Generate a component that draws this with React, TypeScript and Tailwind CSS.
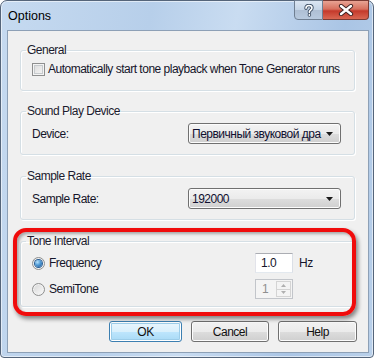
import type { ReactNode } from "react";

function Checkbox() {
  return (
    <span className="block h-[13px] w-[13px] shrink-0 border border-[#8e8f8f] bg-[linear-gradient(135deg,#d9d9d9,#f8f8f8)] shadow-[inset_0_0_0_1px_#f4f4f4,inset_0_0_0_2px_#c6cacd]" />
  );
}

function Radio({ checked }: { checked?: boolean }) {
  return (
    <span className="flex h-[13px] w-[13px] shrink-0 items-center justify-center rounded-full border border-[#8e8f8f] bg-[linear-gradient(135deg,#d6d6d6,#fbfbfb)] shadow-[inset_0_0_0_1px_#f2f2f2]">
      {checked && (
        <span className="block h-[7px] w-[7px] rounded-full bg-[radial-gradient(circle_at_35%_30%,#b7e2fb_0%,#4f9ad6_45%,#18508f_100%)] shadow-[0_0_0_1px_#2b5f95]" />
      )}
    </span>
  );
}

function Combo({ value }: { value: string }) {
  return (
    <div className="flex h-[21px] w-[153px] items-center rounded-[3px] border border-[#707070] bg-[linear-gradient(180deg,#f3f3f3_0%,#ebebeb_50%,#dddddd_51%,#cfcfcf_100%)] pl-[3px] pr-[7px] shadow-[inset_0_0_0_1px_#fcfcfc]">
      <span className="mr-[4px] flex-1 overflow-hidden whitespace-nowrap text-[#101030]">{value}</span>
      <svg width="7" height="4" viewBox="0 0 7 4" className="shrink-0">
        <path d="M0 0h7L3.5 4z" fill="#1a1a1a" />
      </svg>
    </div>
  );
}

function Group({ title, h, children }: { title: string; h: string; children: ReactNode }) {
  return (
    <fieldset className={`ml-[12px] w-[335px] rounded-[3px] border border-[#d5dfe5] shadow-[inset_1px_1px_0_#fff,1px_1px_0_#fff] ${h}`}>
      <legend className="ml-[5px] px-[1px] leading-[15px] text-[#1b1b2e]">{title}</legend>
      {children}
    </fieldset>
  );
}

function Button({ label, w, def }: { label: string; w: string; def?: boolean }) {
  return (
    <button
      className={`flex h-[21px] items-center justify-center rounded-[3px] border ${w} ${
        def
          ? "border-[#3c7fb1] bg-[linear-gradient(180deg,#eaf6fd_0%,#d9f0fc_50%,#bee6fd_51%,#a7d9f5_100%)] shadow-[inset_0_0_0_1px_#fff,inset_0_0_0_2px_#9ccde9]"
          : "border-[#707070] bg-[linear-gradient(180deg,#f2f2f2_0%,#ebebeb_50%,#dddddd_51%,#cfcfcf_100%)] shadow-[inset_0_0_0_1px_#fcfcfc]"
      } text-[#111]`}
    >
      {label}
    </button>
  );
}

export default function App() {
  return (
    <div className="h-[360px] w-[376px] bg-white font-['Segoe_UI','Liberation_Sans',sans-serif] text-[12px] tracking-[-0.5px] text-[#15152a]">
      <div className="flex h-[358px] w-[374px] flex-col rounded-t-[7px] rounded-b-[4px] border border-[#55657a] bg-[linear-gradient(100deg,#c6daf0_0%,#b7cfea_35%,#c9dcf1_55%,#aac5e5_80%,#b9d0ea_100%)] shadow-[inset_0_0_0_1px_rgba(255,255,255,0.55)]">
        {/* title bar */}
        <div className="flex h-[29px] items-start">
          <span className="ml-[7px] mt-[7px] text-[12.5px] leading-[16px] tracking-normal text-black">Options</span>
          <div className="ml-auto mr-[4px] -mt-px flex">
            <div className="flex h-[20px] w-[29px] items-center justify-center rounded-bl-[4px] border border-[#6f7f92] bg-[linear-gradient(180deg,#dbe6f3_0%,#c4d4e6_50%,#aebfd4_51%,#b8cadf_100%)]">
              <svg width="10" height="13" viewBox="0 0 10 13">
                <path
                  d="M2 4.2C2 2.4 3.3 1.5 5 1.5s3 .9 3 2.5c0 1.3-.9 1.8-1.7 2.3-.6.4-.9.7-.9 1.5V8.4"
                  fill="none"
                  stroke="#3e5066"
                  strokeWidth="3.4"
                  strokeLinecap="round"
                />
                <circle cx="5.4" cy="11" r="1.8" fill="#3e5066" />
                <path
                  d="M2 4.2C2 2.4 3.3 1.5 5 1.5s3 .9 3 2.5c0 1.3-.9 1.8-1.7 2.3-.6.4-.9.7-.9 1.5V8.4"
                  fill="none"
                  stroke="#ffffff"
                  strokeWidth="1.6"
                  strokeLinecap="round"
                />
                <circle cx="5.4" cy="11" r="0.9" fill="#ffffff" />
              </svg>
            </div>
            <div className="flex h-[20px] w-[46px] items-center justify-center rounded-br-[4px] border border-l-0 border-[#7a3a33] bg-[linear-gradient(180deg,#e8a393_0%,#d7705e_45%,#c4392b_55%,#d96752_100%)]">
              <svg width="16" height="12" viewBox="0 0 16 12">
                <path d="M3 2l10 8M13 2L3 10" stroke="#3a2020" strokeWidth="4.2" strokeLinecap="round" />
                <path d="M3 2l10 8M13 2L3 10" stroke="#ffffff" strokeWidth="2.4" strokeLinecap="round" />
              </svg>
            </div>
          </div>
        </div>

        {/* client area */}
        <div className="relative mb-[4px] ml-[6px] mr-[4px] flex flex-1 flex-col border border-[#8da0b6] bg-[#f0f0f0] pt-[12px]">
          <Group title="General" h="h-[48px]">
            <div className="ml-[11px] mt-[4px] flex items-center gap-[3px]">
              <Checkbox />
              <span className="whitespace-nowrap leading-[14px]">
                Automatically start tone playback when Tone Generator runs
              </span>
            </div>
          </Group>

          <div className="mt-[13px]">
            <Group title="Sound Play Device" h="h-[51px]">
              <div className="ml-[11px] mr-[13px] mt-[4px] flex items-center">
                <span>Device:</span>
                <div className="ml-auto">
                  <Combo value="Первичный звуковой дра" />
                </div>
              </div>
            </Group>
          </div>

          <div className="mt-[14px]">
            <Group title="Sample Rate" h="h-[51px]">
              <div className="ml-[11px] mr-[13px] mt-[4px] flex items-center">
                <span>Sample Rate:</span>
                <div className="ml-auto">
                  <Combo value="192000" />
                </div>
              </div>
            </Group>
          </div>

          <div className="mt-[14px]">
            <Group title="Tone Interval" h="h-[73px]">
              <div className="ml-[11px] mt-[4px] flex flex-col gap-[6px]">
                <div className="flex h-[20px] items-center">
                  <div className="flex w-[223px] items-center">
                    <Radio checked />
                    <span className="ml-[4px]">Frequency</span>
                  </div>
                  <div className="flex h-[20px] w-[38px] items-center border border-[#abadb3] border-b-[#e3e9ef] border-l-[#e2e3ea] border-r-[#dbdfe6] bg-white pl-[5px]">
                    1.0
                  </div>
                  <span className="ml-[6px]">Hz</span>
                </div>
                <div className="flex h-[20px] items-center">
                  <div className="flex w-[223px] items-center">
                    <Radio />
                    <span className="ml-[4px]">SemiTone</span>
                  </div>
                  <div className="flex h-[20px] w-[38px] items-stretch border border-[#c2c5ca] bg-[#f4f4f4]">
                    <span className="flex flex-1 items-center pl-[6px] text-[#8f8f8f]">1</span>
                    <div className="my-[1px] mr-[1px] flex w-[15px] flex-col">
                      <div className="flex flex-1 items-center justify-center border border-[#d4d4d4] bg-[#f4f4f4]">
                        <svg width="5" height="3" viewBox="0 0 5 3">
                          <path d="M0 3h5L2.5 0z" fill="#b0b0b0" />
                        </svg>
                      </div>
                      <div className="flex flex-1 items-center justify-center border border-t-0 border-[#d4d4d4] bg-[#f4f4f4]">
                        <svg width="5" height="3" viewBox="0 0 5 3">
                          <path d="M0 0h5L2.5 3z" fill="#b0b0b0" />
                        </svg>
                      </div>
                    </div>
                  </div>
                </div>
              </div>
            </Group>
          </div>

          <div className="mr-[11px] mt-[14px] flex justify-end gap-[9px]">
            <Button label="OK" w="w-[73px]" def />
            <Button label="Cancel" w="w-[78px]" />
            <Button label="Help" w="w-[79px]" />
          </div>

          {/* red annotation around Tone Interval */}
          <div className="pointer-events-none absolute left-[5px] top-[197px] h-[88px] w-[343px] rounded-[13px] border-[4px] border-[#f00c0c] shadow-[2px_3px_4px_rgba(0,0,0,0.45),inset_2px_2px_3px_rgba(0,0,0,0.3)]" />
        </div>
      </div>
    </div>
  );
}
